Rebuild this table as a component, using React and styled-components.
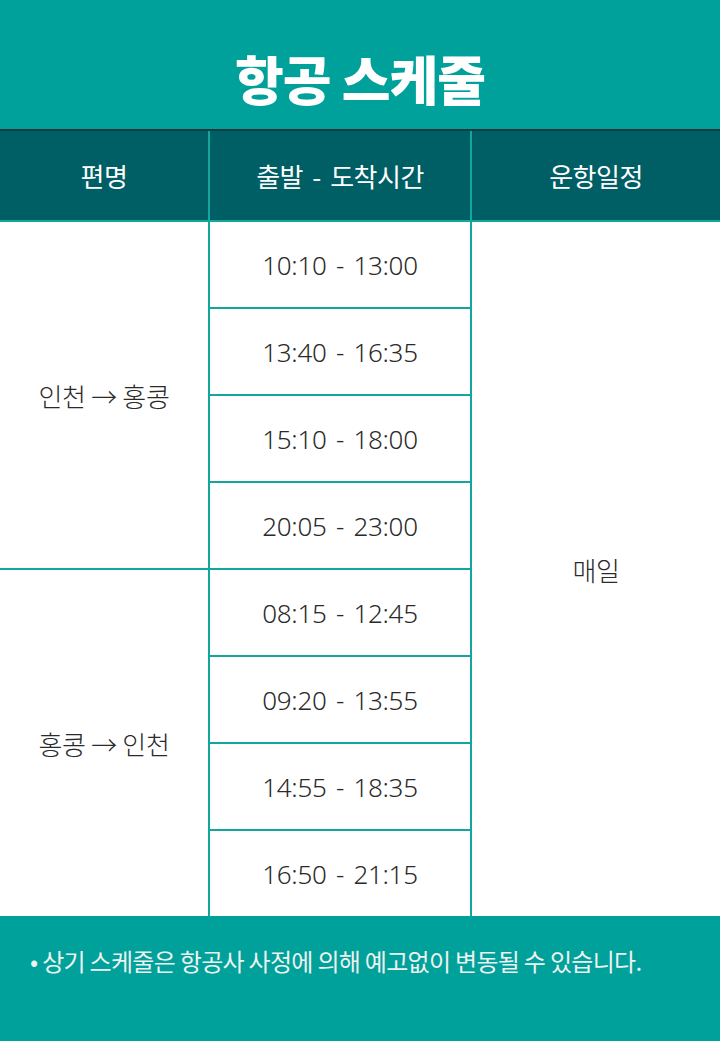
import React from 'react'
import styled, { createGlobalStyle } from 'styled-components'

const GlobalStyle = createGlobalStyle`
  html, body { margin: 0; padding: 0; }
  body {
    width: 720px;
    font-family: "Noto Sans", "Noto Sans CJK KR", sans-serif;
    background: #00a19a;
  }
`

const Page = styled.div`
  width: 720px;
  height: 1041px;
  display: flex;
  flex-direction: column;
  background: #00a19a;
`

const TitleBand = styled.div`
  height: 129px;
  display: flex;
  align-items: center;
  justify-content: center;
  border-bottom: 2px solid #163b3e;
`

const Title = styled.h1`
  margin: 0;
  padding-top: 26px;
  font-family: "Noto Sans CJK KR", sans-serif;
  font-weight: 900;
  font-size: 53px;
  letter-spacing: -1px;
  color: #fff;
`

const Grid = styled.div`
  display: grid;
  grid-template-columns: 208px 260px 1fr;
  grid-template-rows: 89px repeat(8, 85px);
  column-gap: 2px;
  row-gap: 2px;
  background: #12a69d;
`

const Head = styled.div`
  background: #005e65;
  color: #fff;
  font-family: "Noto Sans CJK KR", sans-serif;
  font-size: 26px;
  letter-spacing: -0.5px;
  word-spacing: 4px;
  display: flex;
  align-items: center;
  justify-content: center;
`

const Cell = styled.div`
  background: #fff;
  color: #2a2a2a;
  display: flex;
  align-items: center;
  justify-content: center;
  font-family: ${(p) => (p.time ? '"Noto Sans", sans-serif' : '"Noto Sans CJK KR", sans-serif')};
  font-weight: 300;
  font-size: 26px;
  word-spacing: ${(p) => (p.time ? '3px' : '0')};
  letter-spacing: -0.3px;
  grid-row: ${(p) => p.span || 'auto'};
  grid-column: ${(p) => p.col || 'auto'};
`

const Footer = styled.div`
  flex: 1;
  padding: 27px 0 0 30px;
  color: #eef2f1;
  font-family: "Noto Sans CJK KR", sans-serif;
  font-size: 24px;
  letter-spacing: -0.7px;
`

const outbound = ['10:10 - 13:00', '13:40 - 16:35', '15:10 - 18:00', '20:05 - 23:00']
const inbound = ['08:15 - 12:45', '09:20 - 13:55', '14:55 - 18:35', '16:50 - 21:15']

export default function App() {
  return (
    <Page>
      <GlobalStyle />
      <TitleBand>
        <Title>항공 스케줄</Title>
      </TitleBand>
      <Grid>
        <Head>편명</Head>
        <Head>출발 - 도착시간</Head>
        <Head>운항일정</Head>
        <Cell col="1" span="2 / span 4">인천 → 홍콩</Cell>
        {outbound.map((t, i) => (
          <Cell key={t} time col="2" span={`${i + 2}`}>{t}</Cell>
        ))}
        <Cell col="3" span="2 / span 8">매일</Cell>
        <Cell col="1" span="6 / span 4">홍콩 → 인천</Cell>
        {inbound.map((t, i) => (
          <Cell key={t} time col="2" span={`${i + 6}`}>{t}</Cell>
        ))}
      </Grid>
      <Footer>• 상기 스케줄은 항공사 사정에 의해 예고없이 변동될 수 있습니다.</Footer>
    </Page>
  )
}
